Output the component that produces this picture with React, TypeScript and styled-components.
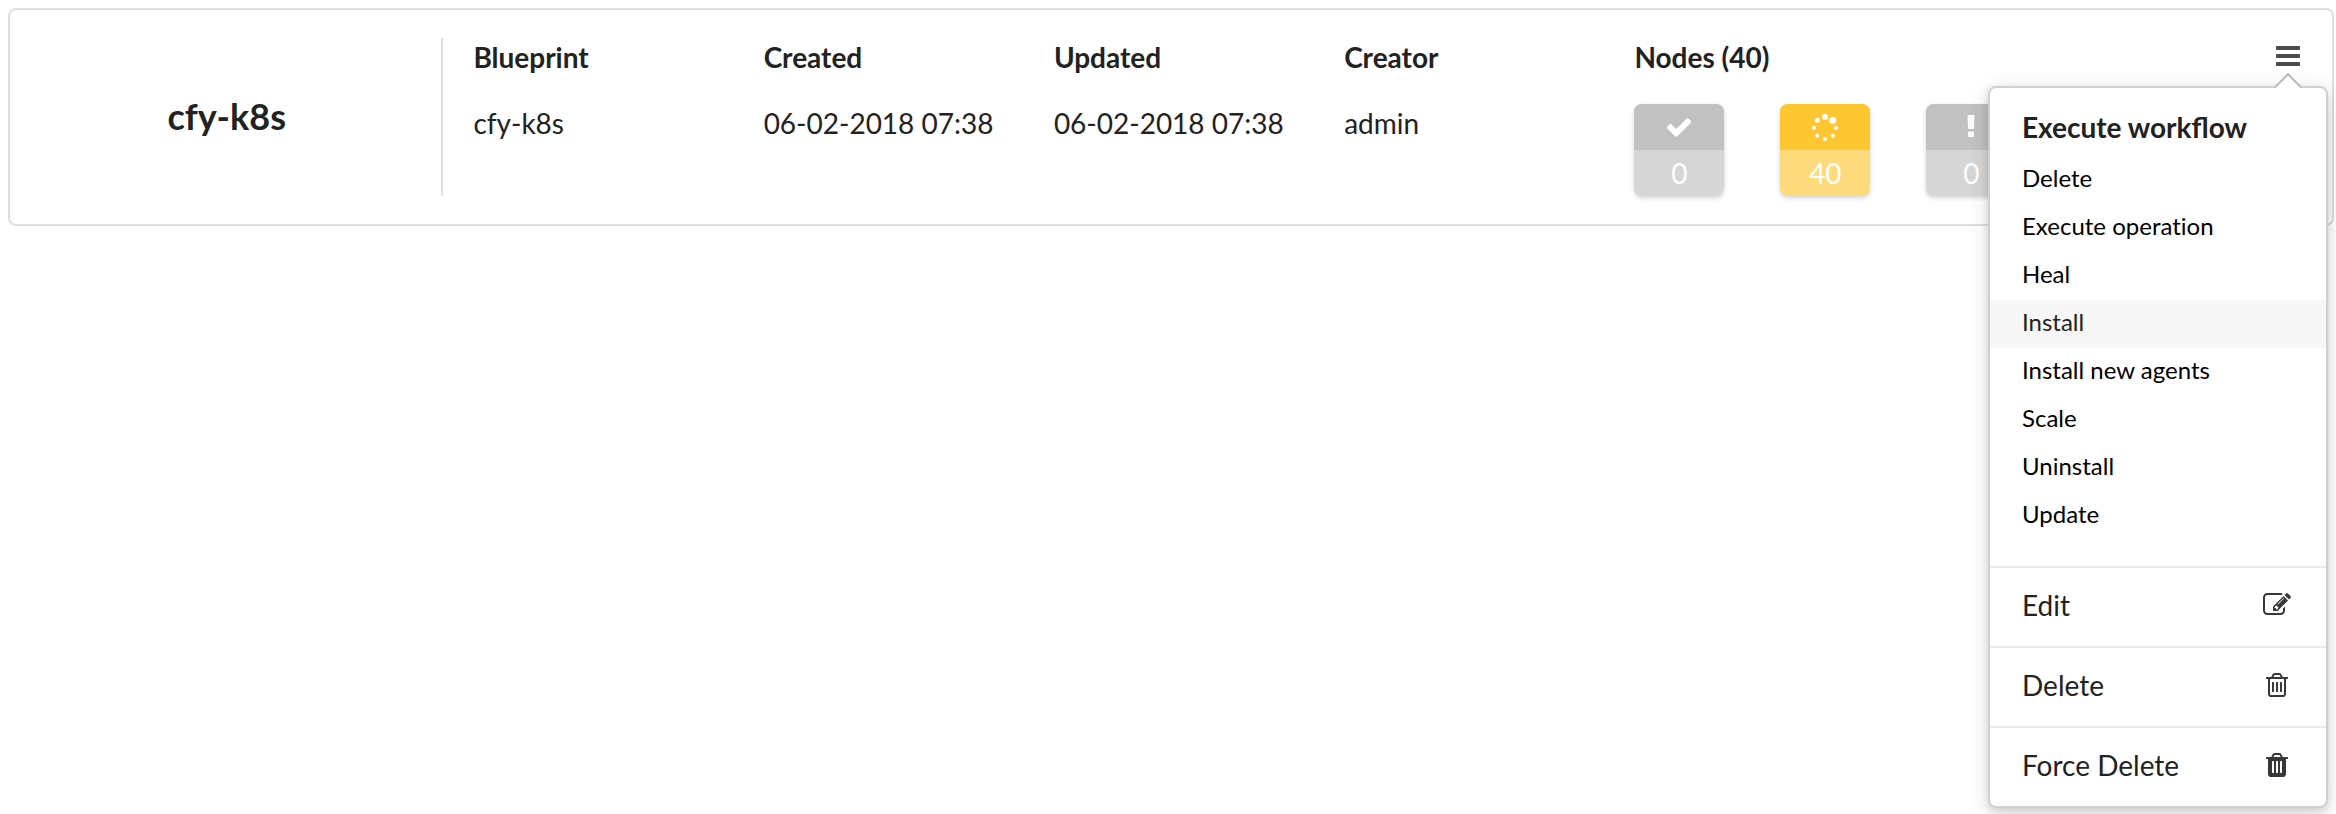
import React from "react";
import styled, { createGlobalStyle } from "styled-components";

const GlobalStyle = createGlobalStyle`
  *, *::before, *::after { box-sizing: border-box; }
  body {
    margin: 0;
    background: #fff;
    color: #222;
    font-family: Lato, "Liberation Sans", sans-serif;
    font-size: 28px;
    line-height: 38px;
  }
  button { font: inherit; color: inherit; }
`;

const Page = styled.main`
  min-height: 100vh;
  padding: 8px 2px 8px 8px;
`;

const Card = styled.article`
  display: grid;
  grid-template-columns: 3fr 2fr 2fr 2fr 2fr 5fr;
  padding: 28px 0;
  border: 2px solid #dededf;
  border-radius: 8px;
`;

const NameCell = styled.header`
  display: flex;
  align-items: center;
  justify-content: center;
  min-width: 0;
  margin-right: 2px;
  padding: 0 0 2px 2px;
  border-right: 2px solid #dededf;
`;

const Name = styled.h2`
  margin: 0;
  font-size: 36px;
  line-height: 44px;
`;

const Cell = styled.section`
  min-width: 0;
  padding-left: 28px;
  white-space: nowrap;
`;

const CellTitle = styled.h3`
  margin: 0 0 28px;
  font-size: 28px;
  line-height: 38px;
`;

const CellValue = styled.p`
  margin: 0;
`;

const NodesCell = styled(Cell)`
  display: grid;
  grid-template-columns: 1fr auto;
  padding-right: 30px;
`;

const Tiles = styled.ul`
  grid-column: 1 / -1;
  display: grid;
  grid-template-columns: repeat(4, 90px);
  gap: 56px;
  margin: 0;
  padding: 0;
  list-style: none;
`;

const Tile = styled.li<{ $top: string; $bottom: string }>`
  height: 92px;
  overflow: hidden;
  border-radius: 8px;
  background: ${(p) => p.$bottom};
  box-shadow: 0 2px 4px rgba(34, 36, 38, 0.2);
  color: #fff;
  text-align: center;

  > div {
    display: flex;
    align-items: center;
    justify-content: center;
    height: 46px;
  }
  > div:first-child { background: ${(p) => p.$top}; }
`;

const Glyph = styled.svg`
  display: block;
  width: 28px;
  height: 28px;
  fill: currentColor;
`;

const MenuAnchor = styled.div`
  position: relative;
  height: 38px;
`;

const MenuButton = styled.button`
  display: block;
  padding: 4px 0;
  border: 0;
  background: none;
  color: #4c4c4c;
  cursor: pointer;
`;

const Popup = styled.div`
  position: absolute;
  z-index: 1;
  top: 48px;
  right: -26px;
  width: 340px;
  padding-top: 20px;
  border: 2px solid #d0d0d1;
  border-radius: 8px;
  background: #fff;
  box-shadow: 0 4px 8px rgba(34, 36, 38, 0.12), 0 4px 20px rgba(34, 36, 38, 0.15);

  &::before {
    content: "";
    position: absolute;
    top: -11px;
    right: 28px;
    width: 20px;
    height: 20px;
    border: solid #bababc;
    border-width: 2px 0 0 2px;
    background: #fff;
    transform: rotate(45deg);
  }
`;

const PopupTitle = styled.h3`
  margin: 0 0 10px;
  padding: 0 32px;
  font-size: 28px;
  line-height: 38px;
`;

const Workflows = styled.div`
  padding-bottom: 26px;
`;

const Workflow = styled.button<{ $active: boolean }>`
  display: block;
  width: 100%;
  padding: 0 32px 4px;
  border: 0;
  background: ${(p) => (p.$active ? "#f7f7f7" : "transparent")};
  color: ${(p) => (p.$active ? "#222" : "#000")};
  font-size: 24px;
  font-variant-ligatures: none;
  line-height: 44px;
  text-align: left;
  cursor: pointer;
`;

const Action = styled.button`
  display: flex;
  align-items: center;
  justify-content: space-between;
  width: 100%;
  padding: 22px 35px 26px 32px;
  border: 0;
  border-top: 2px solid #e9e9e9;
  background: transparent;
  line-height: 30px;
  text-align: left;
  cursor: pointer;

  svg { color: #383838; }
`;

const bar = (y: number) =>
  `M1664 ${y}v128q0 26-19 45t-45 19h-1408q-26 0-45-19t-19-45v-128q0-26 19-45t45-19h1408q26 0 45 19t19 45z`;
const slot = (x: number, y: number, h: number) =>
  `M${x} ${y}v${h}q0 14-9 23t-23 9h-64q-14 0-23-9t-9-23v-${h}q0-14 9-23t23-9h64q14 0 23 9t9 23z`;
const can =
  "M672 384h448l-48-117q-7-9-17-11h-317q-10 2-17 11zm928 32v64q0 14-9 23t-23 9h-96v948q0 83-47 143.5t-113 60.5h-832q-66 0-113-58.5t-47-141.5v-952h-96q-14 0-23-9t-9-23v-64q0-14 9-23t23-9h309l70-167q15-37 54-63t79-26h320q40 0 79 26t54 63l70 167h309q14 0 23 9t9 23z";

const paths = {
  bars: bar(1344) + bar(832) + bar(320),
  check:
    "M1671 566q0 40-28 68l-724 724-136 136q-28 28-68 28t-68-28l-136-136-362-362q-28-28-28-68t28-68l136-136q28-28 68-28t68 28l294 295 656-657q28-28 68-28t68 28l136 136q28 28 28 68z",
  exclamation:
    "M1088 1248v224q0 26-19 45t-45 19h-256q-26 0-45-19t-19-45v-224q0-26 19-45t45-19h256q26 0 45 19t19 45zm30-1056l-28 768q-1 26-20.500 45t-45.500 19h-256q-26 0-45.500-19t-20.500-45l-28-768q-1-26 17.500-45t44.500-19h320q26 0 44.500 19t17.500 45z",
  edit:
    "M888 1184l116-116-152-152-116 116v56h96v96h56zm440-720q-16-16-33 1l-350 350q-17 17-1 33t33-1l350-350q17-17 1-33zm80 594v190q0 119-84.500 203.500t-203.500 84.500h-832q-119 0-203.500-84.500t-84.500-203.500v-832q0-119 84.500-203.500t203.500-84.500h832q63 0 117 25 15 7 18 23 3 17-9 29l-49 49q-14 14-32 8-23-6-45-6h-832q-66 0-113 47t-47 113v832q0 66 47 113t113 47h832q66 0 113-47t47-113v-126q0-13 9-22l64-64q15-15 35-7t20 29zm-96-738l288 288-672 672h-288v-288zm444 132l-92 92-288-288 92-92q28-28 68-28t68 28l152 152q28 28 28 68t-28 68z",
  trashOutline:
    slot(704, 736, 576) + slot(960, 736, 576) + slot(1216, 736, 576) +
    "M1344 1460v-948h-896v948q0 22 7 40.500t14.500 27 10.500 8.500h832q3 0 10.500-8.500t14.500-27 7-40.500z" + can,
  trash: slot(704, 672, 704) + slot(960, 672, 704) + slot(1216, 672, 704) + can,
};

type IconName = keyof typeof paths;

const Icon = ({ name }: { name: IconName }) => (
  <Glyph viewBox="0 0 1792 1792" fillRule="evenodd" aria-hidden="true">
    <path d={paths[name]} />
  </Glyph>
);

const Spinner = () => (
  <Glyph viewBox="0 0 28 28" aria-hidden="true">
    <circle cx="14" cy="4" r="3" />
    <circle cx="21.800" cy="7.200" r="3.500" />
    <circle cx="25" cy="15" r="2" />
    <circle cx="21.800" cy="22.800" r="2" />
    <circle cx="14" cy="26" r="2" />
    <circle cx="6.200" cy="22.800" r="2" />
    <circle cx="3" cy="15" r="2" />
    <circle cx="6.200" cy="7.200" r="2.500" />
  </Glyph>
);

const facts = [
  ["Blueprint", "cfy-k8s"],
  ["Created", "06-02-2018 07:38"],
  ["Updated", "06-02-2018 07:38"],
  ["Creator", "admin"],
];

const workflows = [
  "Delete",
  "Execute operation",
  "Heal",
  "Install",
  "Install new agents",
  "Scale",
  "Uninstall",
  "Update",
];

const actions: { label: string; icon: IconName }[] = [
  { label: "Edit", icon: "edit" },
  { label: "Delete", icon: "trashOutline" },
  { label: "Force Delete", icon: "trash" },
];

const gray = { $top: "#c1c1c1", $bottom: "#d6d6d6" };
const yellow = { $top: "#fec732", $bottom: "#fddb7d" };

export default function App() {
  return (
    <>
      <GlobalStyle />
      <Page>
        <Card>
          <NameCell>
            <Name>cfy-k8s</Name>
          </NameCell>
          {facts.map(([title, value]) => (
            <Cell key={title}>
              <CellTitle>{title}</CellTitle>
              <CellValue>{value}</CellValue>
            </Cell>
          ))}
          <NodesCell>
            <CellTitle>Nodes (40)</CellTitle>
            <MenuAnchor>
              <MenuButton type="button" aria-label="Deployment actions" aria-expanded="true">
                <Icon name="bars" />
              </MenuButton>
              <Popup>
                <PopupTitle>Execute workflow</PopupTitle>
                <Workflows>
                  {workflows.map((name) => (
                    <Workflow key={name} type="button" $active={name === "Install"}>
                      {name}
                    </Workflow>
                  ))}
                </Workflows>
                {actions.map(({ label, icon }) => (
                  <Action key={label} type="button">
                    {label}
                    <Icon name={icon} />
                  </Action>
                ))}
              </Popup>
            </MenuAnchor>
            <Tiles>
              <Tile {...gray}>
                <div><Icon name="check" /></div>
                <div>0</div>
              </Tile>
              <Tile {...yellow}>
                <div><Spinner /></div>
                <div>40</div>
              </Tile>
              <Tile {...gray}>
                <div><Icon name="exclamation" /></div>
                <div>0</div>
              </Tile>
            </Tiles>
          </NodesCell>
        </Card>
      </Page>
    </>
  );
}
